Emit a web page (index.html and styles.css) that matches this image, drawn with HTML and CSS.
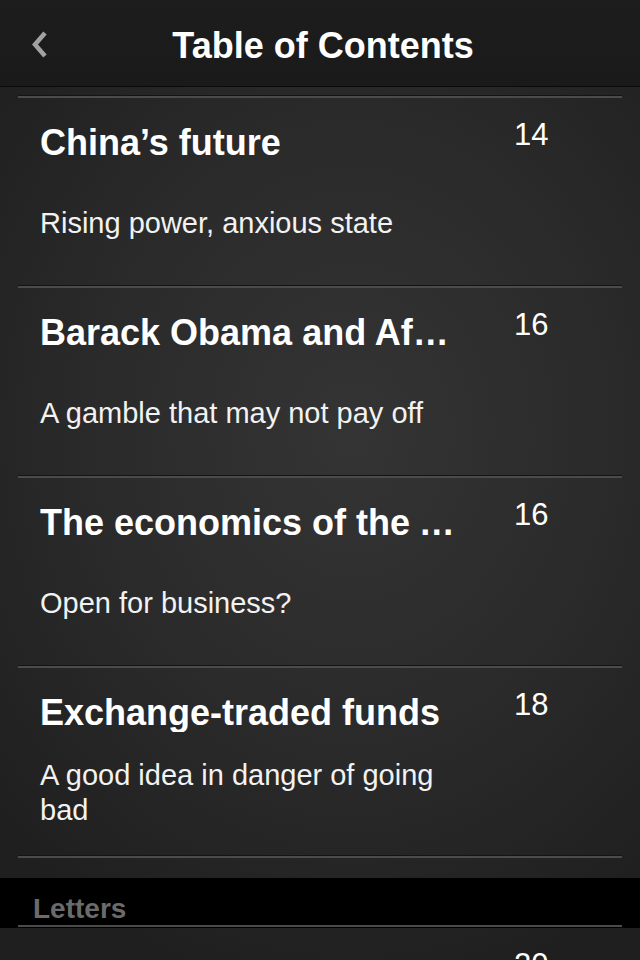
FILE: index.html
```html
<!DOCTYPE html>
<html lang="en">
<head>
    <meta charset="UTF-8">
    <meta name="viewport" content="width=device-width, initial-scale=1.0">
    <title>Table of Contents</title>
    <link rel="stylesheet" href="styles.css">
</head>
<body>
    <!-- Top bar -->
    <header class="topbar">
        <a href="#" class="back" aria-label="Back">
            <svg width="20" height="30" viewBox="0 0 20 30">
                <path d="M15 3 L5 14.5 L15 26" fill="none" stroke="#a2a2a2" stroke-width="4.5" stroke-linecap="butt" stroke-linejoin="miter"/>
            </svg>
        </a>
        <h1>Table of Contents</h1>
        <span></span>
    </header>

    <!-- Leaders -->
    <ul class="toc">
        <li class="row">
            <div class="text">
                <h2>China’s future</h2>
                <div class="sub"><p>Rising power, anxious state</p></div>
            </div>
            <span class="page">14</span>
        </li>
        <li class="row">
            <div class="text">
                <h2>Barack Obama and Afghanistan</h2>
                <div class="sub"><p>A gamble that may not pay off</p></div>
            </div>
            <span class="page">16</span>
        </li>
        <li class="row">
            <div class="text">
                <h2>The economics of the Arab spring</h2>
                <div class="sub"><p>Open for business?</p></div>
            </div>
            <span class="page">16</span>
        </li>
        <li class="row">
            <div class="text">
                <h2>Exchange-traded funds</h2>
                <div class="sub"><p>A good idea in danger of going bad</p></div>
            </div>
            <span class="page">18</span>
        </li>
        <li class="list-end"></li>
    </ul>

    <!-- Letters -->
    <div class="section">
        <h3>Letters</h3>
    </div>
    <ul class="toc">
        <li class="row first">
            <div class="text">
                <h2>On China, Afghanistan and more</h2>
                <div class="sub"><p>Letters to the editor</p></div>
            </div>
            <span class="page">20</span>
        </li>
    </ul>
</body>
</html>
```

FILE: styles.css
```css
* {
    margin: 0;
    padding: 0;
    box-sizing: border-box;
}

html, body {
    height: 100%;
}

body {
    width: 640px;
    height: 960px;
    overflow: hidden;
    font-family: "Liberation Sans", Arial, sans-serif;
    color: #fff;
    background: radial-gradient(ellipse 75% 60% at 55% 45%, #343434 0%, #2a2a2a 55%, #1f1f1f 100%);
}

/* Top bar */
.topbar {
    display: grid;
    grid-template-columns: 90px 1fr 90px;
    align-items: center;
    height: 87px;
    background: linear-gradient(#1d1d1d, #1a1a1a);
    border-bottom: 1px solid #0a0a0a;
}

.back {
    display: flex;
    padding-left: 30px;
    padding-top: 4px;
}

.topbar h1 {
    text-align: center;
    font-size: 36px;
    font-weight: bold;
    line-height: 81px;
    padding-top: 5px;
    padding-left: 6px;
    color: #fff;
}

/* List */
.toc {
    list-style: none;
}

.toc:first-of-type {
    padding-top: 8px;
}

.row {
    display: flex;
    margin: 0 18px;
    padding: 20px 0 1px 22px;
    border-top: 1px solid #141414;
    box-shadow: inset 0 2px #4b4b4b;
}

.row.first {
    padding-top: 18px;
    border-top: none;
    box-shadow: none;
}

.text {
    width: 426px;
}

.row h2 {
    margin-top: 8px;
    font-size: 36px;
    line-height: 38px;
    font-weight: bold;
    white-space: nowrap;
    overflow: hidden;
    text-overflow: ellipsis;
}

.row.first h2 {
    margin-top: 12px;
}

.sub {
    height: 122px;
    display: flex;
    align-items: center;
}

.sub p {
    font-size: 29px;
    line-height: 35px;
    color: #f2f2f2;
}

.page {
    margin-left: 48px;
    padding-top: 1px;
    font-size: 31px;
    line-height: 36px;
}

.list-end {
    height: 23px;
    margin: 0 18px;
    border-top: 1px solid #141414;
    box-shadow: inset 0 2px #4b4b4b;
}

/* Section header */
.section {
    background: #000;
    padding-bottom: 1px;
}

.section h3 {
    margin: 0 18px;
    padding: 14px 0 0 15px;
    font-size: 28px;
    line-height: 33px;
    font-weight: bold;
    color: #6b6b6b;
    border-bottom: 2px solid #4b4b4b;
}
```
